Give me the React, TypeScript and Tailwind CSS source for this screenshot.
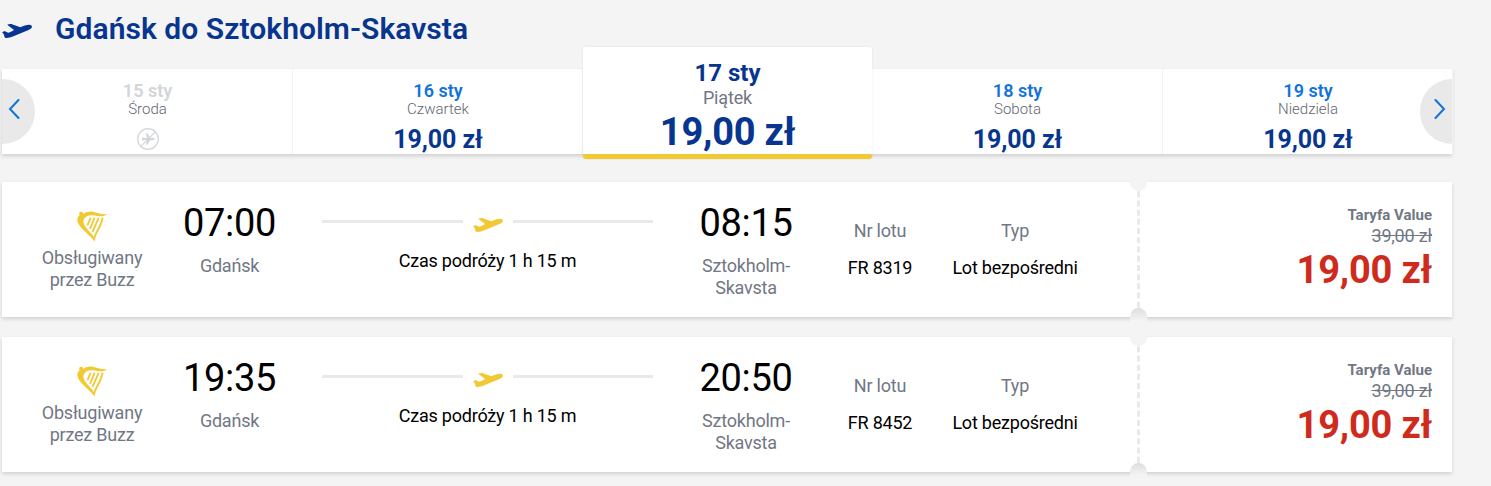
type Day = {
  date: string;
  weekday: string;
  price?: string;
  selected?: boolean;
};

type Flight = {
  departure: string;
  arrival: string;
  number: string;
  price: string;
};

const days: Day[] = [
  { date: "15 sty", weekday: "Środa" },
  { date: "16 sty", weekday: "Czwartek", price: "19,00 zł" },
  { date: "17 sty", weekday: "Piątek", price: "19,00 zł", selected: true },
  { date: "18 sty", weekday: "Sobota", price: "19,00 zł" },
  { date: "19 sty", weekday: "Niedziela", price: "19,00 zł" },
];

const flights: Flight[] = [
  { departure: "07:00", arrival: "08:15", number: "FR 8319", price: "19,00 zł" },
  { departure: "19:35", arrival: "20:50", number: "FR 8452", price: "19,00 zł" },
];

const PlaneIcon = ({ className }: { className?: string }) => (
  <svg viewBox="0 0 30 14" className={className} fill="currentColor">
    <path d="M0.2 8.4 C1.2 7.3 2.8 7 4 7.8 L6.2 8.7 C8.5 8.3 10.6 7.2 12 6.1 L5.2 0.7 C6.8 -0.1 9.2 0 10.6 0.4 L18.4 3.2 C21.5 1.9 24.6 0.8 27 0.8 C29 0.8 30.2 1.8 29.9 3.1 C29.6 4.5 28.2 5.2 26.6 5.9 L11.4 12.2 C8.6 13.3 6.4 14 4 13.9 C2.4 13.8 2.3 12.6 2.2 11.5 C2 9.9 1 9.3 0.2 8.4 Z" />
  </svg>
);

const NoFlightIcon = () => (
  <svg viewBox="0 0 22 22" className="h-[22px] w-[22px] text-[#d2d5d9]" fill="none" stroke="currentColor">
    <circle cx="11" cy="11" r="10.3" strokeWidth="1.2" />
    <path
      d="M5 11 L6 9 L7.2 10 L10 10 L8.8 5.2 L10.2 5.2 L13.2 9.8 L16.5 10 Q18 10.3 18 11 Q18 11.7 16.5 12 L13.2 12.2 L10.2 16.8 L8.8 16.8 L10 12 L7.2 12 L6 13.2 Z"
      fill="currentColor"
      stroke="none"
    />
    <path d="M3.8 18.4 L18.4 3.8" strokeWidth="1.2" />
  </svg>
);

const HarpIcon = () => (
  <svg viewBox="0 0 30 31" className="h-[31px] w-[30px] text-[#f1c933]" fill="none" stroke="currentColor">
    <path
      d="M2.2 2.2 C2.6 0.6 5 0.2 6 1.8 L6.5 3 C9 1 12.5 0.2 16 0.8 C20.5 1.6 24.5 4 30 3 C28.2 5.4 24.2 5.8 20.5 5 C16.5 4.1 11.4 3.5 8 6.8 C5.9 9 6 11.6 7.6 14.4 C9.5 17.8 13.7 21.5 15.9 24.5 C17.2 26.4 17.5 28 17.7 30.6 C15.3 27.4 12 24.4 8.5 21 C4.9 17.6 1.7 14.4 0.6 10.8 C0.1 9 0.2 7.4 1.1 6 L2.4 4.6 Z"
      fill="currentColor"
      stroke="none"
    />
    <path d="M13.6 6.8 L10.4 14.4" strokeWidth="1.8" />
    <path d="M17.6 6.6 L13 17.8" strokeWidth="1.8" />
    <path d="M21.6 6.9 L15.5 20.8" strokeWidth="1.8" />
    <path
      d="M24.6 6.8 L26.6 6.4 C25.6 11.8 23.8 15.8 21.4 20 C19.6 23.2 18.2 26.6 17.6 30.4 L16.8 26.4 C17.4 23.6 18.4 21.4 19.8 19 C22 15 23.8 11.4 24.6 6.8 Z"
      fill="currentColor"
      stroke="none"
    />
  </svg>
);

const Chevron = ({ d }: { d: string }) => (
  <svg viewBox="0 0 12 20" className="h-5 w-3 text-[#1273db]" fill="none" stroke="currentColor" strokeWidth="2" strokeLinecap="round">
    <path d={d} />
  </svg>
);

const DayTab = ({ day }: { day: Day }) => {
  if (day.selected) {
    return (
      <div className="relative z-10 -mt-[22px] -mb-[5px] flex h-28 w-[289px] shrink-0 flex-col items-center rounded-[3px] border-b-[5px] border-[#f1c933] bg-white pt-[11px] shadow-[0_0_3px_rgba(0,0,0,0.08)]">
        <div className="text-[24px] leading-[30px] font-bold text-[#073590]">{day.date}</div>
        <div className="text-[18px] leading-5 tracking-[-0.15px] text-[#717784]">{day.weekday}</div>
        <div className="mt-px text-[38px] leading-[46px] font-bold tracking-[-0.2px] whitespace-nowrap text-[#073590]">{day.price}</div>
      </div>
    );
  }

  return (
    <div className="flex w-[290px] shrink-0 flex-col items-center border-r border-[#f2f2f2] pt-3 pl-px first:w-[291px] last:w-[288px] last:border-r-0 last:pl-0 nth-4:w-[291px]">
      <div className={`text-[18px] leading-5 font-semibold ${day.price ? "text-[#1273db]" : "text-[#d2d5d9]"}`}>
        {day.date}
      </div>
      <div className="text-[15px] leading-4 font-light text-[#5f6673]">{day.weekday}</div>
      {day.price ? (
        <div className="mt-2 text-[25px] leading-[30px] font-bold tracking-[-0.1px] whitespace-nowrap text-[#073590]">{day.price}</div>
      ) : (
        <div className="mt-[11px]">
          <NoFlightIcon />
        </div>
      )}
    </div>
  );
};

const FlightCard = ({ flight }: { flight: Flight }) => (
  <div className="relative flex h-[135px] bg-white text-[18px] leading-[22px] tracking-[-0.22px] text-[#717784] shadow-[0_2px_4px_rgba(0,0,0,0.15)]">
    <div className="flex w-[180px] flex-col items-center pt-[29px] text-center">
      <HarpIcon />
      <div className="mt-[5px]">
        Obsługiwany
        <br />
        przez Buzz
      </div>
    </div>

    <div className="flex w-[94px] flex-col items-center pt-[19px] pl-px">
      <div className="text-[38px] leading-[44px] tracking-[-0.35px] text-black">{flight.departure}</div>
      <div className="mt-[10px]">Gdańsk</div>
    </div>

    <div className="mx-[46px] w-[331px] pt-[36px] text-center">
      <div className="flex h-[14px] justify-between">
        <div className="mt-[2px] h-[3px] w-[141px] bg-[#e9e9e9]" />
        <PlaneIcon className="h-[14px] w-[30px] text-[#f1c933]" />
        <div className="mt-[2px] h-[3px] w-[140px] bg-[#e9e9e9]" />
      </div>
      <div className="mt-[18px] text-black">Czas podróży 1 h 15 m</div>
    </div>

    <div className="flex w-[94px] flex-col items-center pt-[19px] text-center">
      <div className="text-[38px] leading-[44px] tracking-[-0.35px] text-black">{flight.arrival}</div>
      <div className="mt-[10px]">
        Sztokholm-
        <br />
        Skavsta
      </div>
    </div>

    <div className="ml-[47px] w-20 pt-[38px] text-center">
      <div>Nr lotu</div>
      <div className="mt-[15px] text-black">{flight.number}</div>
    </div>

    <div className="ml-[25px] w-[140px] pt-[38px] text-center">
      <div>Typ</div>
      <div className="mt-[15px] whitespace-nowrap text-black">Lot bezpośredni</div>
    </div>

    <div className="ml-auto flex w-[315px] flex-col items-end border-l-[3px] border-dashed border-[#e9e9e9] pt-[22px] pr-5">
      <div className="text-[15px] leading-[22px] font-bold tracking-normal">Taryfa Value</div>
      <div className="leading-5 line-through">39,00 zł</div>
      <div className="text-[38px] leading-[48px] font-bold tracking-[-0.2px] whitespace-nowrap text-[#cf2b1d]">{flight.price}</div>
    </div>

    {/* ticket notches */}
    <div className="absolute -top-2 left-[1128px] h-[17px] w-[17px] rounded-full bg-[#f4f4f4]" />
    <div className="absolute -bottom-[5px] left-[1128px] h-[14px] w-[17px] rounded-t-full bg-[linear-gradient(#dedede,#f4f4f4_90%)]" />
  </div>
);

export default function App() {
  return (
    <div className="h-[486px] w-[1491px] overflow-hidden bg-[#f4f4f4] pl-[2px] font-['Roboto',sans-serif]">
      <header className="flex h-[69px] items-start pt-[10px] text-[#073590]">
        <PlaneIcon className="mt-[14px] h-[14px] w-[30px]" />
        <h1 className="ml-[23px] text-[30px] leading-[37px] font-semibold tracking-[0.06px]">Gdańsk do Sztokholm-Skavsta</h1>
      </header>

      <div className="relative flex h-[85px] w-[1450px] bg-white shadow-[0_2px_4px_rgba(0,0,0,0.16)]">
        {days.map((day) => (
          <DayTab key={day.date} day={day} />
        ))}
        <button className="absolute top-[10px] left-0 flex h-[65px] w-[33px] items-center rounded-r-full bg-[#e9e9e9] pb-[5px] pl-[6px]">
          <Chevron d="M10.5 1 L2 10 L10.5 19" />
        </button>
        <button className="absolute top-[10px] right-0 flex h-[65px] w-8 items-center rounded-l-full bg-[#e9e9e9] pb-[5px] pl-[14px]">
          <Chevron d="M1.5 1 L10 10 L1.5 19" />
        </button>
      </div>

      <div className="mt-7 flex w-[1450px] flex-col gap-5">
        {flights.map((flight) => (
          <FlightCard key={flight.number} flight={flight} />
        ))}
      </div>
    </div>
  );
}
